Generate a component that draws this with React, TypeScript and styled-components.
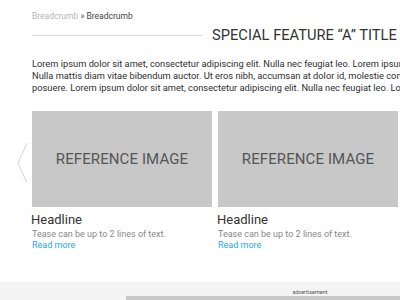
import styled, { createGlobalStyle } from "styled-components";

const GlobalStyle = createGlobalStyle`
  html, body {
    margin: 0;
    padding: 0;
    background: #fff;
    overflow: hidden;
  }
  body {
    font-family: Roboto, "Liberation Sans", sans-serif;
    color: #333;
  }
`;

const introLines = [
  "Lorem ipsum dolor sit amet, consectetur adipiscing elit. Nulla nec feugiat leo. Lorem ipsum dolor sit amet.",
  "Nulla mattis diam vitae bibendum auctor. Ut eros nibh, accumsan at dolor id, molestie consectetur nisl.",
  "posuere. Lorem ipsum dolor sit amet, consectetur adipiscing elit. Nulla nec feugiat leo. Lorem ipsum.",
];

const cards = [
  { headline: "Headline", tease: "Tease can be up to 2 lines of text." },
  { headline: "Headline", tease: "Tease can be up to 2 lines of text." },
];

function ChevronLeft() {
  return (
    <svg width="12" height="42" viewBox="0 0 12 42">
      <polyline
        points="11,1 2,21 11,41"
        fill="none"
        stroke="#d6d6d6"
        strokeWidth="1"
      />
    </svg>
  );
}

export default function App() {
  return (
    <Page>
      <GlobalStyle />
      <Header>
        <Breadcrumbs>
          <Crumb>Breadcrumb</Crumb> <Current>» Breadcrumb</Current>
        </Breadcrumbs>
        <TitleRow>
          <Rule />
          <Title>SPECIAL FEATURE “A” TITLE</Title>
        </TitleRow>
      </Header>

      <Intro>
        {introLines.map((line, i) => (
          <IntroLine key={i}>{line}</IntroLine>
        ))}
      </Intro>

      <Carousel>
        <ArrowCol>
          <ChevronLeft />
        </ArrowCol>
        <Track>
          {cards.map((card, i) => (
            <Card key={i}>
              <ImageBox>REFERENCE IMAGE</ImageBox>
              <Headline>{card.headline}</Headline>
              <Tease>{card.tease}</Tease>
              <ReadMore href="#">Read more</ReadMore>
            </Card>
          ))}
        </Track>
      </Carousel>

      <Footer>
        <AdLabel>advertisement</AdLabel>
        <AdBox />
      </Footer>
    </Page>
  );
}

/* Styled Components */

const Page = styled.div`
  width: 400px;
  height: 300px;
  overflow: hidden;
  display: flex;
  flex-direction: column;
`;

const Header = styled.div`
  padding: 10px 0 0 32px;
`;

const Breadcrumbs = styled.div`
  font-size: 8.5px;
  line-height: 12px;
  white-space: nowrap;
`;

const Crumb = styled.span`
  color: #b4b4b4;
`;

const Current = styled.span`
  color: #444;
`;

const TitleRow = styled.div`
  display: flex;
  align-items: center;
  gap: 10px;
  width: 420px;
`;

const Rule = styled.div`
  width: 170px;
  flex: none;
  height: 1px;
  background: #d8d8d8;
`;

const Title = styled.h1`
  margin: 0;
  font-size: 14.7px;
  font-weight: 400;
  line-height: 26px;
  color: #333;
  white-space: nowrap;
`;

const Intro = styled.div`
  margin: 10px 0 0 32px;
  flex: none;
`;

const IntroLine = styled.div`
  font-size: 9.3px;
  line-height: 12px;
  color: #2e2e2e;
  white-space: nowrap;
`;

const Carousel = styled.div`
  display: flex;
  margin-top: 17px;
  flex: none;
`;

const ArrowCol = styled.div`
  width: 32px;
  flex: none;
  display: flex;
  justify-content: flex-end;
  padding: 31px 4px 0 0;
  box-sizing: border-box;
`;

const Track = styled.div`
  display: flex;
  gap: 6px;
`;

const Card = styled.div`
  width: 180px;
  flex: none;
  display: flex;
  flex-direction: column;
`;

const ImageBox = styled.div`
  height: 96px;
  background: #c8c8c8;
  display: flex;
  align-items: center;
  justify-content: center;
  font-size: 15px;
  color: #555;
  letter-spacing: 0.1px;
`;

const Headline = styled.h2`
  margin: 5px 0 0 -1px;
  font-size: 13px;
  font-weight: 400;
  line-height: 16px;
  color: #333;
`;

const Tease = styled.p`
  margin: 1px 0 0 0;
  font-size: 9px;
  line-height: 11px;
  color: #888;
`;

const ReadMore = styled.a`
  font-size: 9px;
  line-height: 11px;
  color: #1da6ef;
  text-decoration: none;
`;

const Footer = styled.div`
  margin-top: auto;
  height: 18px;
  background: #f4f4f4;
  display: flex;
  flex-direction: column;
  align-items: flex-start;
  padding-left: 126px;
  box-sizing: border-box;
`;

const AdLabel = styled.div`
  width: 368px;
  text-align: center;
  font-size: 5.5px;
  line-height: 8px;
  margin-top: 6px;
  color: #555;
`;

const AdBox = styled.div`
  width: 368px;
  height: 10px;
  background: #c8c8c8;
`;
